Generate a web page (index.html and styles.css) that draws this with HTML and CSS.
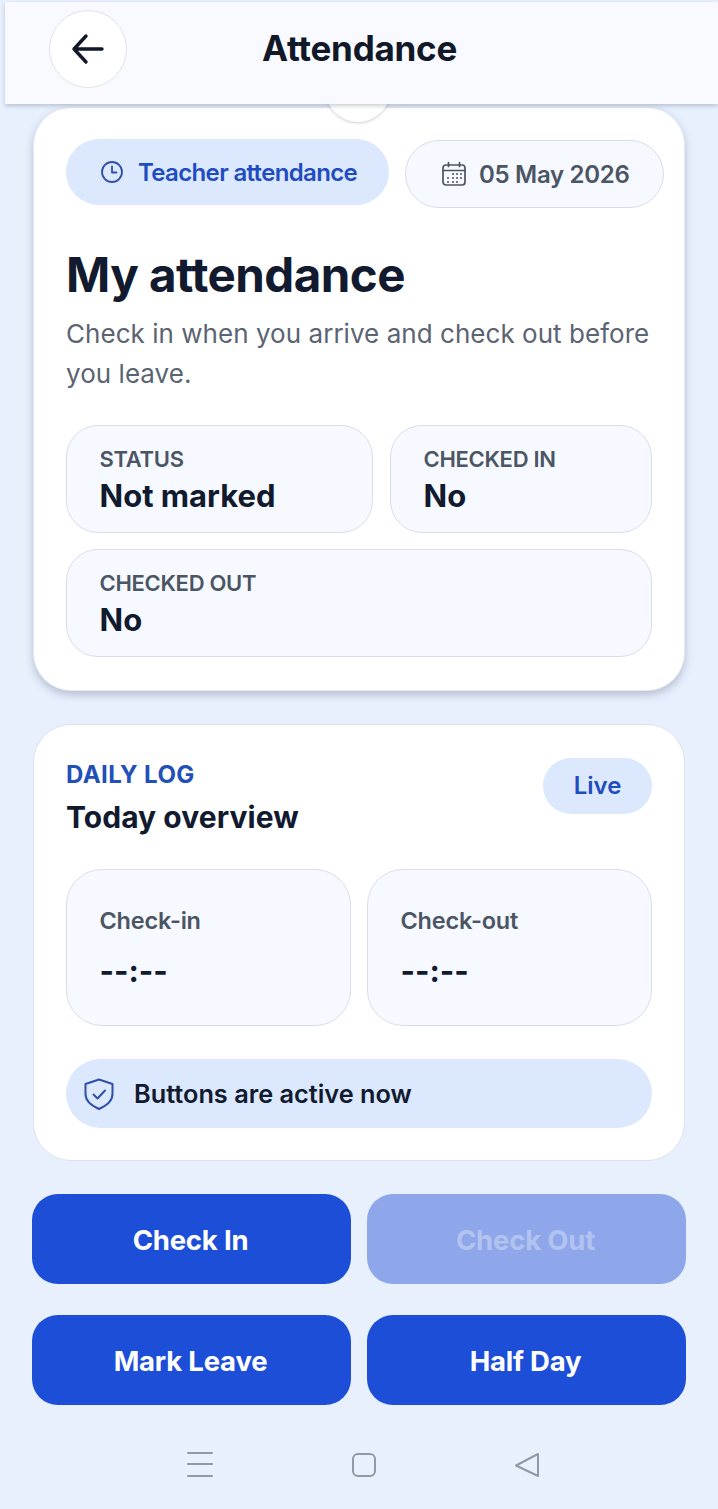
FILE: index.html

```html
<!DOCTYPE html>
<html lang="en">
<head>
    <meta charset="UTF-8">
    <meta name="viewport" content="width=device-width, initial-scale=1.0">
    <title>Attendance</title>
    <link rel="stylesheet" href="styles.css">
</head>
<body>
    <div class="page">
        <header class="top-bar">
            <button class="back-btn" aria-label="Back">
                <svg width="36" height="36" viewBox="0 0 36 36" fill="none" stroke="#111827" stroke-width="3.4" stroke-linecap="round" stroke-linejoin="round"><path d="M32 18H4M16 5 4 18l12 13"/></svg>
            </button>
            <h1 class="top-title">Attendance</h1>
        </header>
        <div class="peek-circle"></div>

        <main class="content">
            <section class="card card-main">
                <div class="pill-row">
                    <div class="pill pill-role">
                        <svg width="24" height="24" viewBox="0 0 24 24" fill="none" stroke="#2f4fa8" stroke-width="1.8" stroke-linecap="round" stroke-linejoin="round"><circle cx="12" cy="12" r="10"/><path d="M12 6.500V12.500h4.500"/></svg>
                        <span>Teacher attendance</span>
                    </div>
                    <div class="pill pill-date">
                        <svg width="26" height="26" viewBox="0 0 26 26" fill="none" stroke="#4b5563" stroke-width="1.700" stroke-linecap="round"><rect x="2" y="4" width="22" height="20" rx="3"/><path d="M2 9.500h22M7.500 1.500v4M18.500 1.500v4"/><path d="M12 13h.01M16 13h.01M20 13h.01M7 17h.01M12 17h.01M16 17h.01M20 17h.01M7 21h.01M12 21h.01M16 21h.01" stroke-width="2"/></svg>
                        <span>05 May 2026</span>
                    </div>
                </div>

                <h2 class="main-heading">My attendance</h2>
                <p class="main-desc">Check in when you arrive and check out before you leave.</p>

                <div class="stat-grid">
                    <div class="stat-box">
                        <div class="stat-label">STATUS</div>
                        <div class="stat-value">Not marked</div>
                    </div>
                    <div class="stat-box">
                        <div class="stat-label">CHECKED IN</div>
                        <div class="stat-value">No</div>
                    </div>
                    <div class="stat-box stat-wide">
                        <div class="stat-label">CHECKED OUT</div>
                        <div class="stat-value">No</div>
                    </div>
                </div>
            </section>

            <section class="card card-log">
                <div class="log-head">
                    <div>
                        <div class="log-eyebrow">DAILY LOG</div>
                        <h3 class="log-title">Today overview</h3>
                    </div>
                    <div class="live-badge">Live</div>
                </div>

                <div class="log-grid">
                    <div class="log-box">
                        <div class="log-label">Check-in</div>
                        <div class="log-time">--:--</div>
                    </div>
                    <div class="log-box">
                        <div class="log-label">Check-out</div>
                        <div class="log-time">--:--</div>
                    </div>
                </div>

                <div class="notice">
                    <svg width="34" height="34" viewBox="0 0 34 34" fill="none" stroke="#2f4fa8" stroke-width="2" stroke-linecap="round" stroke-linejoin="round"><path d="M17 2.500 30.500 7v10c0 7-5.500 11.500-13.500 15C9 28.500 3.500 24 3.500 17V7z"/><path d="m11.500 17.500 4 4 7.500-8"/></svg>
                    <span>Buttons are active now</span>
                </div>
            </section>

            <div class="action-grid">
                <button class="action-btn">Check In</button>
                <button class="action-btn action-off">Check Out</button>
                <button class="action-btn">Mark Leave</button>
                <button class="action-btn">Half Day</button>
            </div>
        </main>

        <nav class="sys-nav">
            <svg width="26" height="28" viewBox="0 0 26 28" fill="none" stroke="#9298a8" stroke-width="2" stroke-linecap="round"><path d="M1 2h24M1 13h24M1 25h24"/></svg>
            <svg width="26" height="26" viewBox="0 0 26 26" fill="none" stroke="#9298a8" stroke-width="2"><rect x="2" y="2" width="22" height="22" rx="5"/></svg>
            <svg width="26" height="26" viewBox="0 0 26 26" fill="none" stroke="#9298a8" stroke-width="2" stroke-linejoin="round"><path d="M24 2v22L2 13.500z"/></svg>
        </nav>
    </div>
</body>
</html>
```

FILE: styles.css

```css
* {
    box-sizing: border-box;
}

body {
    margin: 0;
    font-family: Inter, "Liberation Sans", sans-serif;
    background-color: #e8f0fe;
    color: #111827;
}

.page {
    position: relative;
    width: 718px;
    height: 1509px;
    overflow: hidden;
    padding-top: 2px;
}

.top-bar {
    position: relative;
    z-index: 2;
    height: 102px;
    margin-left: 5px;
    padding: 8px 0 0 44px;
    display: flex;
    align-items: flex-start;
    background-color: #f8faff;
    box-shadow: 0 2px 4px rgba(80, 90, 110, 0.3);
}

.back-btn {
    width: 78px;
    height: 78px;
    padding: 0;
    display: flex;
    align-items: center;
    justify-content: center;
    background-color: #fff;
    border: 1.5px solid #e0e3eb;
    border-radius: 50%;
}

.top-title {
    margin: 0 0 0 135px;
    height: 76px;
    line-height: 76px;
    font-size: 35px;
    font-weight: 700;
    letter-spacing: -0.25px;
    color: #111827;
}

.peek-circle {
    position: absolute;
    z-index: 1;
    left: 325px;
    top: 56px;
    width: 66px;
    height: 66px;
    border-radius: 50%;
    background-color: #fff;
    box-shadow: 0 1px 3px rgba(80, 90, 110, 0.3);
}

.content {
    padding: 3px 32px 0;
}

.card {
    background-color: #fff;
    border: 1.5px solid #dde2ec;
    border-radius: 38px;
    margin: 0 1px;
}

.card-main {
    height: 584px;
    padding: 31px 20px 0 32px;
    box-shadow: 0 4px 8px rgba(70, 80, 100, 0.3);
    border-color: #e6eaf2;
}

.pill-row {
    display: flex;
    gap: 16px;
}

.pill {
    height: 66px;
    display: flex;
    align-items: center;
    border-radius: 33px;
    font-size: 24px;
    font-weight: 600;
    letter-spacing: -0.65px;
}

.pill-role {
    width: 323px;
    padding-left: 34px;
    gap: 14px;
    background-color: #dbe8fd;
    color: #1f4cc0;
}

.pill-date {
    width: 259px;
    height: 68px;
    margin-top: 1px;
    padding-left: 35px;
    gap: 12px;
    background-color: #f6f9ff;
    border: 1.5px solid #d8dee8;
    border-radius: 34px;
    color: #4b5563;
    font-size: 24px;
    letter-spacing: -0.3px;
}

.main-heading {
    margin: 39px 0 0;
    font-size: 47.5px;
    line-height: 56px;
    font-weight: 700;
    letter-spacing: -0.55px;
    color: #111a2e;
}

.main-desc {
    width: 590px;
    margin: 11px 0 0;
    font-size: 26px;
    line-height: 40px;
    font-weight: 400;
    color: #5b6472;
    letter-spacing: 0.04px;
}

.stat-grid {
    width: 586px;
    margin-top: 31px;
    display: grid;
    grid-template-columns: 307px 262px;
    gap: 16px 17px;
}

.stat-box {
    height: 108px;
    padding: 20px 32.5px 0;
    background-color: #f6f9ff;
    border: 1.5px solid #d8dee8;
    border-radius: 32px;
}

.stat-wide {
    grid-column: 1 / 3;
}

.stat-label {
    font-size: 22px;
    line-height: 26px;
    font-weight: 600;
    color: #4b5563;
    letter-spacing: -0.3px;
}

.stat-value {
    margin-top: 5px;
    font-size: 31px;
    line-height: 38px;
    font-weight: 700;
    color: #111a2e;
    letter-spacing: 0;
}

.card-log {
    height: 437px;
    margin-top: 33px;
    padding: 33px 32px 32px;
}

.log-head {
    display: flex;
    justify-content: space-between;
    align-items: flex-start;
}

.log-eyebrow {
    margin-top: 3px;
    font-size: 24px;
    line-height: 28px;
    font-weight: 700;
    color: #234fb8;
    letter-spacing: 0.4px;
}

.log-title {
    margin: 9px 0 0;
    font-size: 30px;
    line-height: 38px;
    font-weight: 700;
    color: #111a2e;
    letter-spacing: 0.05px;
}

.live-badge {
    width: 109px;
    height: 56px;
    line-height: 56px;
    text-align: center;
    border-radius: 28px;
    background-color: #dbe8fd;
    color: #1f4cc0;
    font-size: 24px;
    font-weight: 600;
}

.log-grid {
    margin-top: 33px;
    display: grid;
    grid-template-columns: 1fr 1fr;
    gap: 16px;
}

.log-box {
    height: 157px;
    padding: 36px 32.5px 0;
    background-color: #f6f9ff;
    border: 1.5px solid #d8dee8;
    border-radius: 36px;
}

.log-label {
    font-size: 23.5px;
    line-height: 30px;
    font-weight: 600;
    color: #4b5563;
    letter-spacing: -0.2px;
}

.log-time {
    margin-top: 16px;
    font-size: 31px;
    line-height: 38px;
    font-weight: 700;
    color: #111a2e;
}

.notice {
    height: 69px;
    margin-top: 33px;
    padding-left: 16px;
    display: flex;
    align-items: center;
    gap: 18px;
    background-color: #dbe8fd;
    border-radius: 35px;
    font-size: 25.3px;
    font-weight: 600;
    color: #111a2e;
}

.action-grid {
    margin-top: 33px;
    display: grid;
    grid-template-columns: 319px 319px;
    gap: 31px 16px;
}

.action-btn {
    height: 90px;
    padding: 2px 2px 0 0;
    border: none;
    border-radius: 26px;
    background-color: #1d4ed8;
    color: #fff;
    font-family: inherit;
    font-size: 27.5px;
    font-weight: 700;
    letter-spacing: -0.2px;
}

.action-off {
    background-color: #8ea7ea;
    color: #b3c3f0;
}

.sys-nav {
    position: absolute;
    left: 187px;
    top: 1451px;
    width: 353px;
    display: flex;
    justify-content: space-between;
    align-items: center;
}
```
